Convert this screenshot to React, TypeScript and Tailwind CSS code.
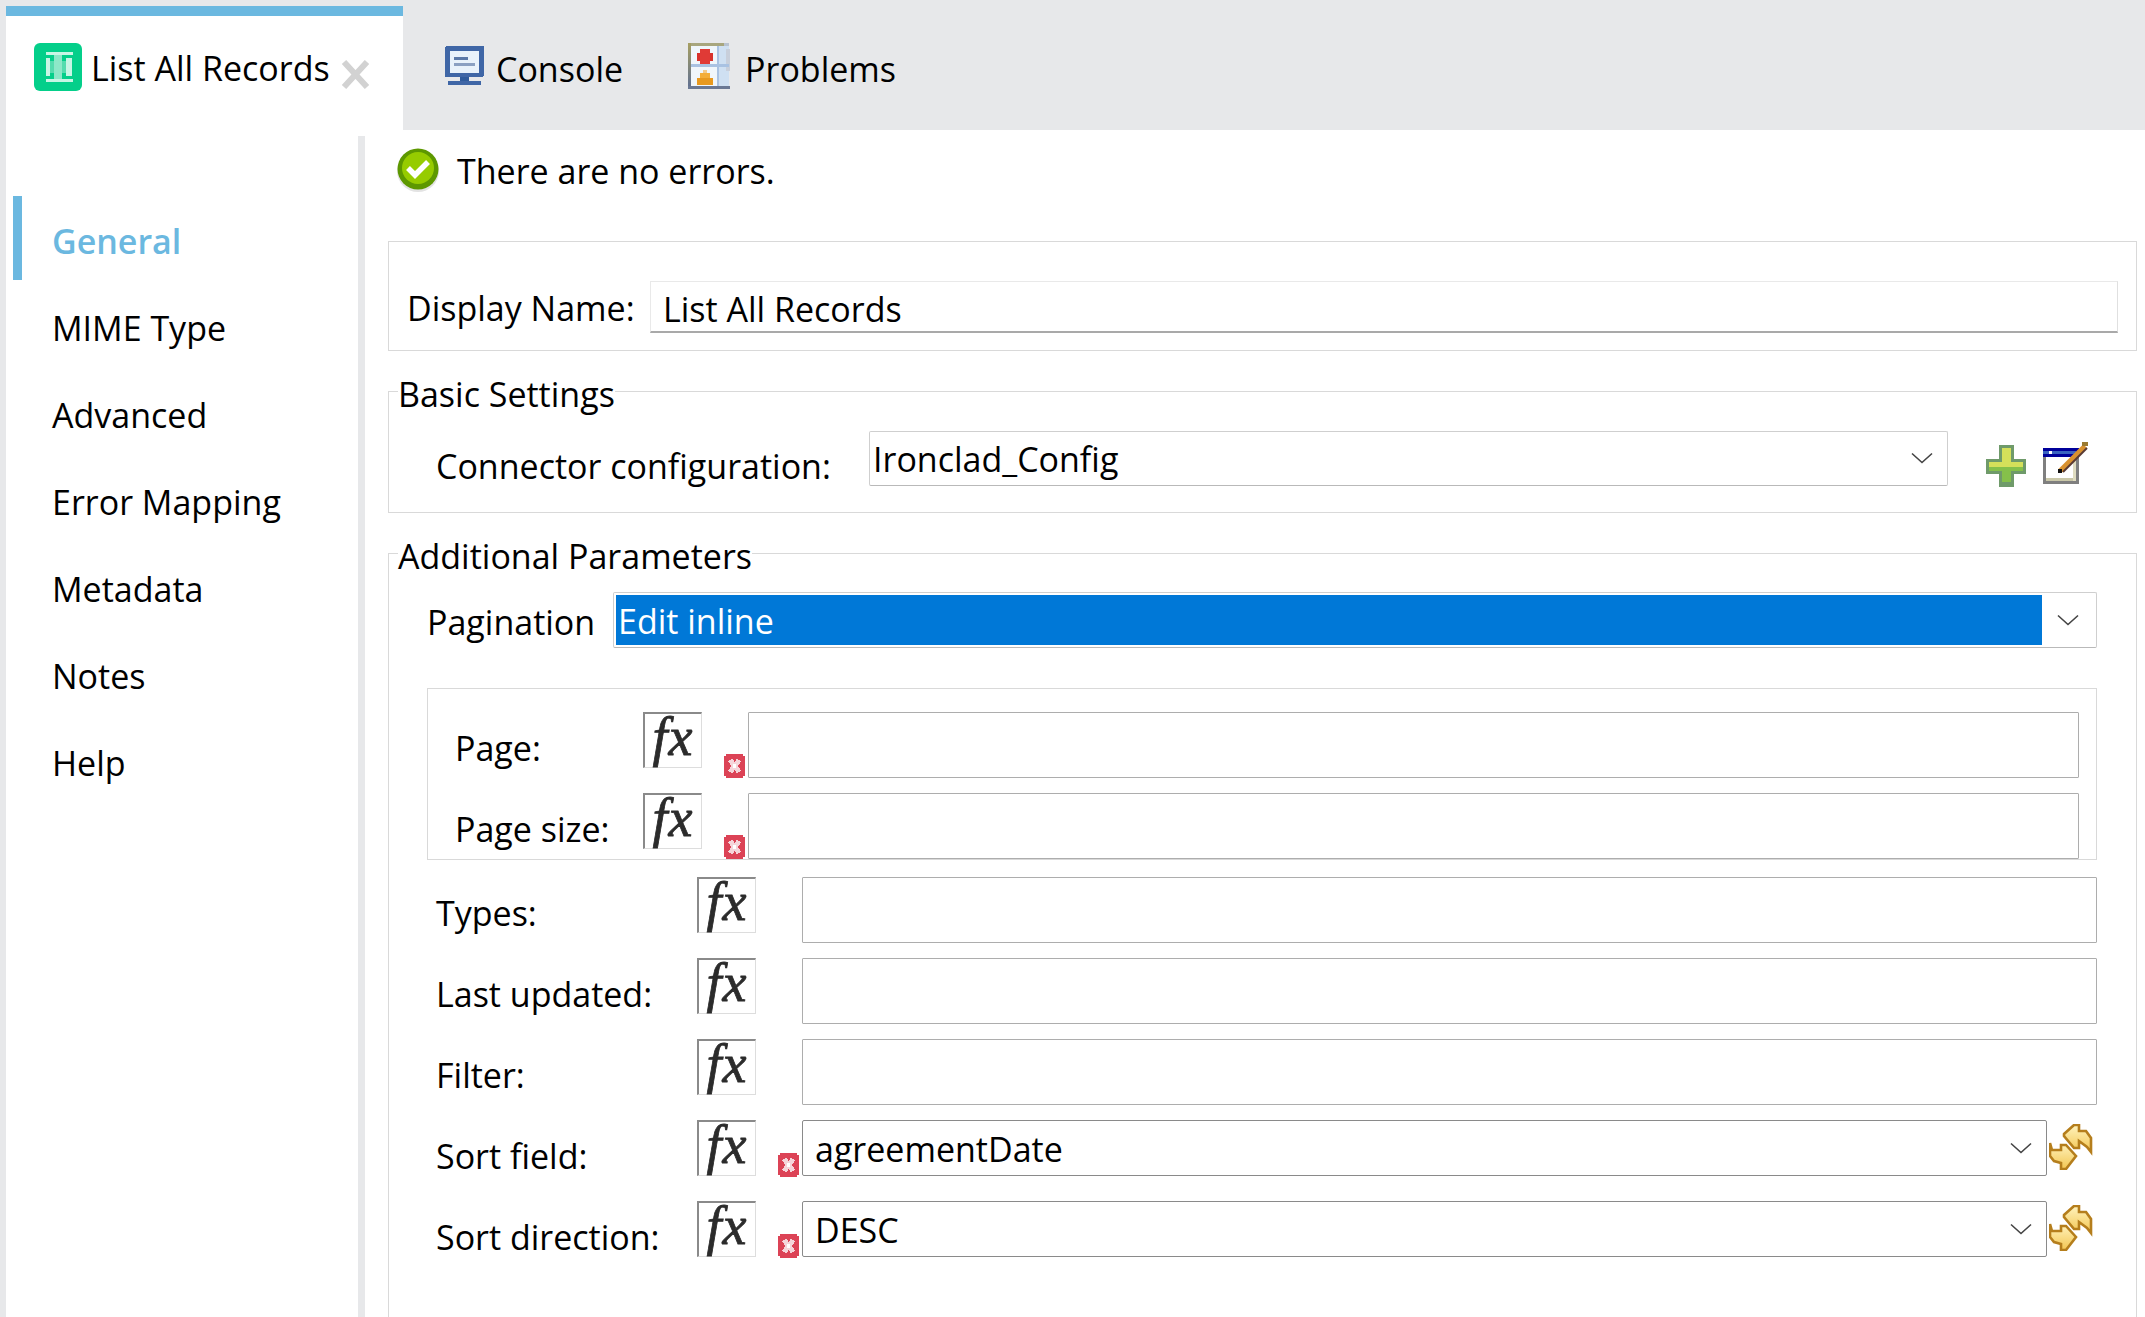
import React from "react";

const ff = "font-['Open_Sans','Noto_Sans',sans-serif]";

function Chevron() {
  return (
    <svg width="22" height="12" viewBox="0 0 22 12" fill="none" className="shrink-0">
      <path d="M1 1.5 L11 10.5 L21 1.5" stroke="#444" strokeWidth="1.6" />
    </svg>
  );
}

function Fx() {
  return (
    <div className="w-[59px] h-[56px] border-t-2 border-l-2 border-r border-b border-t-[#8a8a8a] border-l-[#8a8a8a] border-r-[#ddd] border-b-[#ddd] bg-white flex items-center justify-center shrink-0">
      <span className="font-['Liberation_Serif',serif] italic font-normal text-[54px] tracking-[1px] leading-none text-[#2b2b2b] [-webkit-text-stroke:0.8px_#2b2b2b] -mt-[8px]">fx</span>
    </div>
  );
}

function Err() {
  return (
    <svg width="21" height="24" viewBox="0 0 21 24" shapeRendering="crispEdges" className="shrink-0">
      <rect x="2" y="0" width="17" height="24" fill="#dc4356" />
      <rect x="0" y="2" width="21" height="20" fill="#dc4356" />
      <path d="M6 6 L15 18 M15 6 L6 18" stroke="#f5d5da" strokeWidth="5" />
      <rect x="9" y="10" width="3" height="4" fill="#ffffff" />
    </svg>
  );
}

function Sync() {
  return (
    <svg width="44" height="46" viewBox="0 0 44 46" className="shrink-0">
      <defs>
        <linearGradient id="syncFill" x1="0" y1="0" x2="0" y2="1">
          <stop offset="0" stopColor="#fff3bd" />
          <stop offset="1" stopColor="#f3c653" />
        </linearGradient>
      </defs>
      <path d="M15 10 L25 1 L30 1 L30 7 L37 7 L42 14 L42 28 L38 23 L30 17 L30 24 L25 24 L15 12 Z" fill="url(#syncFill)" stroke="#b57e1c" strokeWidth="2.6" />
      <path d="M1 19 L3 26 L12 26 L12 21 L17 21 L27 32 L17 45 L12 45 L12 39 L5 37 L1 32 Z" fill="url(#syncFill)" stroke="#b57e1c" strokeWidth="2.6" />
    </svg>
  );
}

function Plus() {
  return (
    <svg width="40" height="42" viewBox="0 0 40 42" shapeRendering="crispEdges" className="shrink-0">
      <path d="M13 0 H28 V14 H40 V29 H28 V42 H13 V29 H0 V14 H13 Z" fill="#6f9a6a" />
      <path d="M16 3 H25 V17 H37 V22 H3 V17 H16 Z" fill="#d5e05a" />
      <path d="M3 22 H37 V26 H25 V37 H16 V26 H3 Z" fill="#85c04a" />
    </svg>
  );
}

function EditWin() {
  return (
    <svg width="46" height="44" viewBox="0 0 46 44" className="shrink-0">
      <g shapeRendering="crispEdges">
        <rect x="0" y="6" width="36" height="36" fill="#7f7f7f" />
        <rect x="3" y="15" width="30" height="24" fill="#fff" />
        <rect x="3" y="36" width="30" height="3" fill="#c9c7a8" />
        <rect x="30" y="15" width="3" height="24" fill="#dfdcc0" />
        <rect x="0" y="6" width="36" height="9" fill="#00009a" />
        <rect x="0" y="9" width="33" height="3" fill="#3a63c0" />
        <rect x="6" y="9" width="3" height="3" fill="#fff" />
      </g>
      <path d="M17 29 L42 4" stroke="#d8912f" strokeWidth="5" />
      <path d="M20 30 L44 6" stroke="#5a3a32" strokeWidth="2" />
      <rect x="15" y="27" width="4" height="4" fill="#111" />
      <rect x="39" y="0" width="6" height="4" fill="#9a7a30" />
    </svg>
  );
}

function TabIcon() {
  return (
    <svg width="48" height="48" viewBox="0 0 48 48" className="shrink-0">
      <rect x="0" y="0" width="48" height="48" rx="6" fill="#04cf8a" />
      <rect x="12" y="9" width="27" height="3" fill="#c8f5e5" />
      <rect x="12" y="36" width="27" height="3" fill="#c8f5e5" />
      <rect x="20" y="12" width="8" height="24" fill="#8de8c8" />
      <rect x="12" y="15" width="4" height="18" fill="#c8f5e5" />
      <rect x="32" y="15" width="6" height="18" fill="#c8f5e5" />
      <rect x="16" y="18" width="4" height="12" fill="#55dcae" />
      <rect x="28" y="18" width="4" height="12" fill="#55dcae" />
    </svg>
  );
}

function ConsoleIcon() {
  return (
    <svg width="39" height="39" viewBox="0 0 39 39" shapeRendering="crispEdges" className="shrink-0">
      <rect x="0" y="0" width="39" height="31" rx="2" fill="#3f66a6" />
      <rect x="5" y="5" width="29" height="22" fill="#e8f2fb" />
      <rect x="9" y="11" width="14" height="3" fill="#5b79a8" />
      <rect x="9" y="17" width="21" height="3" fill="#8aa0c2" />
      <rect x="15" y="31" width="9" height="4" fill="#2f5b9c" />
      <rect x="3" y="35" width="33" height="4" fill="#3f66a6" />
    </svg>
  );
}

function ProblemsIcon() {
  return (
    <svg width="45" height="47" viewBox="0 0 45 47" shapeRendering="crispEdges" className="shrink-0">
      <defs>
        <linearGradient id="probSide" x1="0" y1="0" x2="0" y2="1">
          <stop offset="0" stopColor="#a79f62" />
          <stop offset="1" stopColor="#5f6f92" />
        </linearGradient>
      </defs>
      <rect x="0" y="0" width="36" height="3" fill="#a8a67e" />
      <rect x="36" y="0" width="5" height="3" fill="#b8c2d0" />
      <rect x="0" y="0" width="3" height="45" fill="url(#probSide)" />
      <rect x="3" y="3" width="26" height="40" fill="#f0f6fb" />
      <rect x="29" y="3" width="12" height="40" fill="#cfe0f2" />
      <rect x="38" y="6" width="4" height="22" fill="#c8cfdb" />
      <rect x="3" y="21" width="38" height="3" fill="#a9c2e2" />
      <rect x="29" y="3" width="2" height="40" fill="#a9c2e2" />
      <rect x="9" y="10" width="16" height="8" fill="#d8322c" />
      <rect x="12" y="6" width="10" height="15" fill="#e03a36" />
      <rect x="15" y="27" width="4" height="4" fill="#f2c98a" />
      <rect x="12" y="30" width="10" height="5" fill="#f3ad38" />
      <rect x="9" y="35" width="16" height="7" fill="#e8991f" />
      <rect x="0" y="43" width="42" height="3" fill="#6a7894" />
    </svg>
  );
}

function OkIcon() {
  return (
    <svg width="42" height="44" viewBox="0 0 42 44" className="shrink-0">
      <ellipse cx="21" cy="23" rx="21" ry="21" fill="#e3e3e3" />
      <ellipse cx="21" cy="21" rx="20.5" ry="20.5" fill="#5d9800" />
      <ellipse cx="21" cy="20" rx="16" ry="16" fill="#96cc00" />
      <path d="M11 20 L18 27 L31 14" stroke="#fff" strokeWidth="5.5" fill="none" />
    </svg>
  );
}

const nav = ["MIME Type", "Advanced", "Error Mapping", "Metadata", "Notes", "Help"];

function Box({ cls = "" }: { cls?: string }) {
  return <div className={`h-[66px] border border-[#adadad] rounded-[1px] ${cls}`} />;
}

function InnerRow({ label }: { label: string }) {
  return (
    <div className="flex items-start">
      <div className="w-[215px] pl-[27px] pt-[11px] leading-[50px] shrink-0">{label}</div>
      <Fx />
      <div className="w-[46px] flex justify-end pr-[3px] pt-[42px] shrink-0"><Err /></div>
      <Box cls="flex-1" />
    </div>
  );
}

function OuterRow({ label, value, sync }: { label: string; value?: string; sync?: boolean }) {
  return (
    <div className="flex items-start h-[66px]">
      <div className="w-[269px] pl-[8px] pt-[11px] leading-[50px] shrink-0">{label}</div>
      <Fx />
      {sync ? (
        <>
          <div className="w-[46px] flex justify-end pr-[3px] pt-[33px] shrink-0"><Err /></div>
          <div className="h-[56px] w-[1245px] border border-[#8a8a8a] rounded-[2px] flex items-center pl-[12px] pr-[14px] shrink-0">
            <span className="flex-1 mt-[3px]">{value}</span>
            <Chevron />
          </div>
          <div className="ml-[2px] mt-[4px]"><Sync /></div>
        </>
      ) : (
        <div className="pl-[46px] flex-1"><Box cls="w-full" /></div>
      )}
    </div>
  );
}

export default function App() {
  return (
    <div className={`${ff} w-[2145px] h-[1317px] overflow-hidden bg-white text-[34px] text-black flex flex-col`}>
      <div className="h-[130px] bg-[#e7e8ea] flex items-start pt-[6px] pl-[6px] shrink-0">
        <div className="w-[397px] h-[124px] bg-white border-t-[10px] border-[#6bb8e0] flex items-start pl-[28px] pt-[27px] shrink-0">
          <TabIcon />
          <span className="ml-[9px] pt-[1px] leading-[48px] whitespace-nowrap">List All Records</span>
          <svg width="29" height="29" viewBox="0 0 29 29" className="ml-[11px] mt-[17px] shrink-0">
            <path d="M3 2 L26 27 M26 2 L3 27" stroke="#d2d2d2" strokeWidth="6" />
          </svg>
        </div>
        <div className="flex items-start pl-[42px] pt-[40px]">
          <ConsoleIcon />
          <span className="ml-[12px] -mt-[1px] leading-[48px]">Console</span>
        </div>
        <div className="flex items-start pl-[65px] pt-[37px]">
          <ProblemsIcon />
          <span className="ml-[12px] mt-[2px] leading-[48px]">Problems</span>
        </div>
      </div>
      <div className="flex-1 flex min-h-0">
        <div className="w-[6px] bg-[#e7e8ea] shrink-0" />
        <div className="w-[352px] pt-[66px] pl-[7px] shrink-0">
          <div className="h-[84px] border-l-[9px] border-[#6bb8e0] pl-[30px] pt-[6px] flex items-center text-[#6bb8e0] font-semibold">General</div>
          {nav.map((n) => (
            <div key={n} className="h-[87px] pl-[39px] pt-[10px] flex items-center">{n}</div>
          ))}
        </div>
        <div className="w-[7px] mt-[6px] bg-[#e7e8ea] shrink-0" />
        <div className="flex-1 pl-[23px] pr-[8px] min-w-0">
          <div className="h-[111px] flex items-start pt-[18px] pl-[9px] gap-[18px]">
            <OkIcon />
            <span className="leading-[46px]">There are no errors.</span>
          </div>
          <div className="h-[110px] border border-[#d9d9d9] pl-[18px] pr-[18px] flex items-end pb-[17px]">
            <span className="w-[243px] leading-[50px] shrink-0">Display Name:</span>
            <div className="flex-1 h-[52px] border-t border-l border-t-[#e9e9e9] border-l-[#e9e9e9] border-b-2 border-r border-b-[#a9a9a9] border-r-[#e0e0e0] pl-[12px] pt-[3px] leading-[48px]">List All Records</div>
          </div>
          <fieldset className="mt-[18px] border border-[#d9d9d9] h-[144px]">
            <legend className="ml-[9px] pt-[6px] leading-[38px]">Basic Settings</legend>
            <div className="flex items-start pl-[47px] pt-[18px]">
              <span className="w-[433px] leading-[50px] pt-[10px] shrink-0">Connector configuration:</span>
              <div className="w-[1079px] h-[55px] border border-[#cfcfcf] border-b-[#b9b9b9] flex items-center pl-[3px] pr-[14px] rounded-[2px]">
                <span className="flex-1 mt-[2px]">Ironclad_Config</span>
                <div className="-mt-[2px]"><Chevron /></div>
              </div>
              <div className="ml-[38px] mt-[14px]"><Plus /></div>
              <div className="ml-[17px] mt-[11px]"><EditWin /></div>
            </div>
          </fieldset>
          <fieldset className="mt-[18px] border border-[#d9d9d9] h-[800px] pr-[39px]">
            <legend className="ml-[9px] pt-[6px] leading-[38px]">Additional Parameters</legend>
            <div className="flex items-start pl-[38px] pt-[17px]">
              <span className="w-[186px] leading-[50px] pt-[5px] shrink-0">Pagination</span>
              <div className="flex-1 h-[56px] border border-[#cfcfcf] border-b-[#b9b9b9] rounded-[2px] flex items-center p-[2px]">
                <div className="flex-1 h-[50px] bg-[#0078d7] text-white pl-[2px] pt-[3px] leading-[47px]">Edit inline</div>
                <div className="w-[52px] flex justify-center"><Chevron /></div>
              </div>
            </div>
            <div className="ml-[38px] mt-[40px] h-[172px] border border-[#d9d9d9] pr-[17px]">
              <div className="pt-[23px]"><InnerRow label="Page:" /></div>
              <div className="mt-[15px]"><InnerRow label="Page size:" /></div>
            </div>
            <div className="ml-[39px] mt-[17px] flex flex-col gap-[15px]">
              <OuterRow label="Types:" />
              <OuterRow label="Last updated:" />
              <OuterRow label="Filter:" />
              <OuterRow label="Sort field:" value="agreementDate" sync />
              <OuterRow label="Sort direction:" value="DESC" sync />
            </div>
          </fieldset>
        </div>
      </div>
    </div>
  );
}
